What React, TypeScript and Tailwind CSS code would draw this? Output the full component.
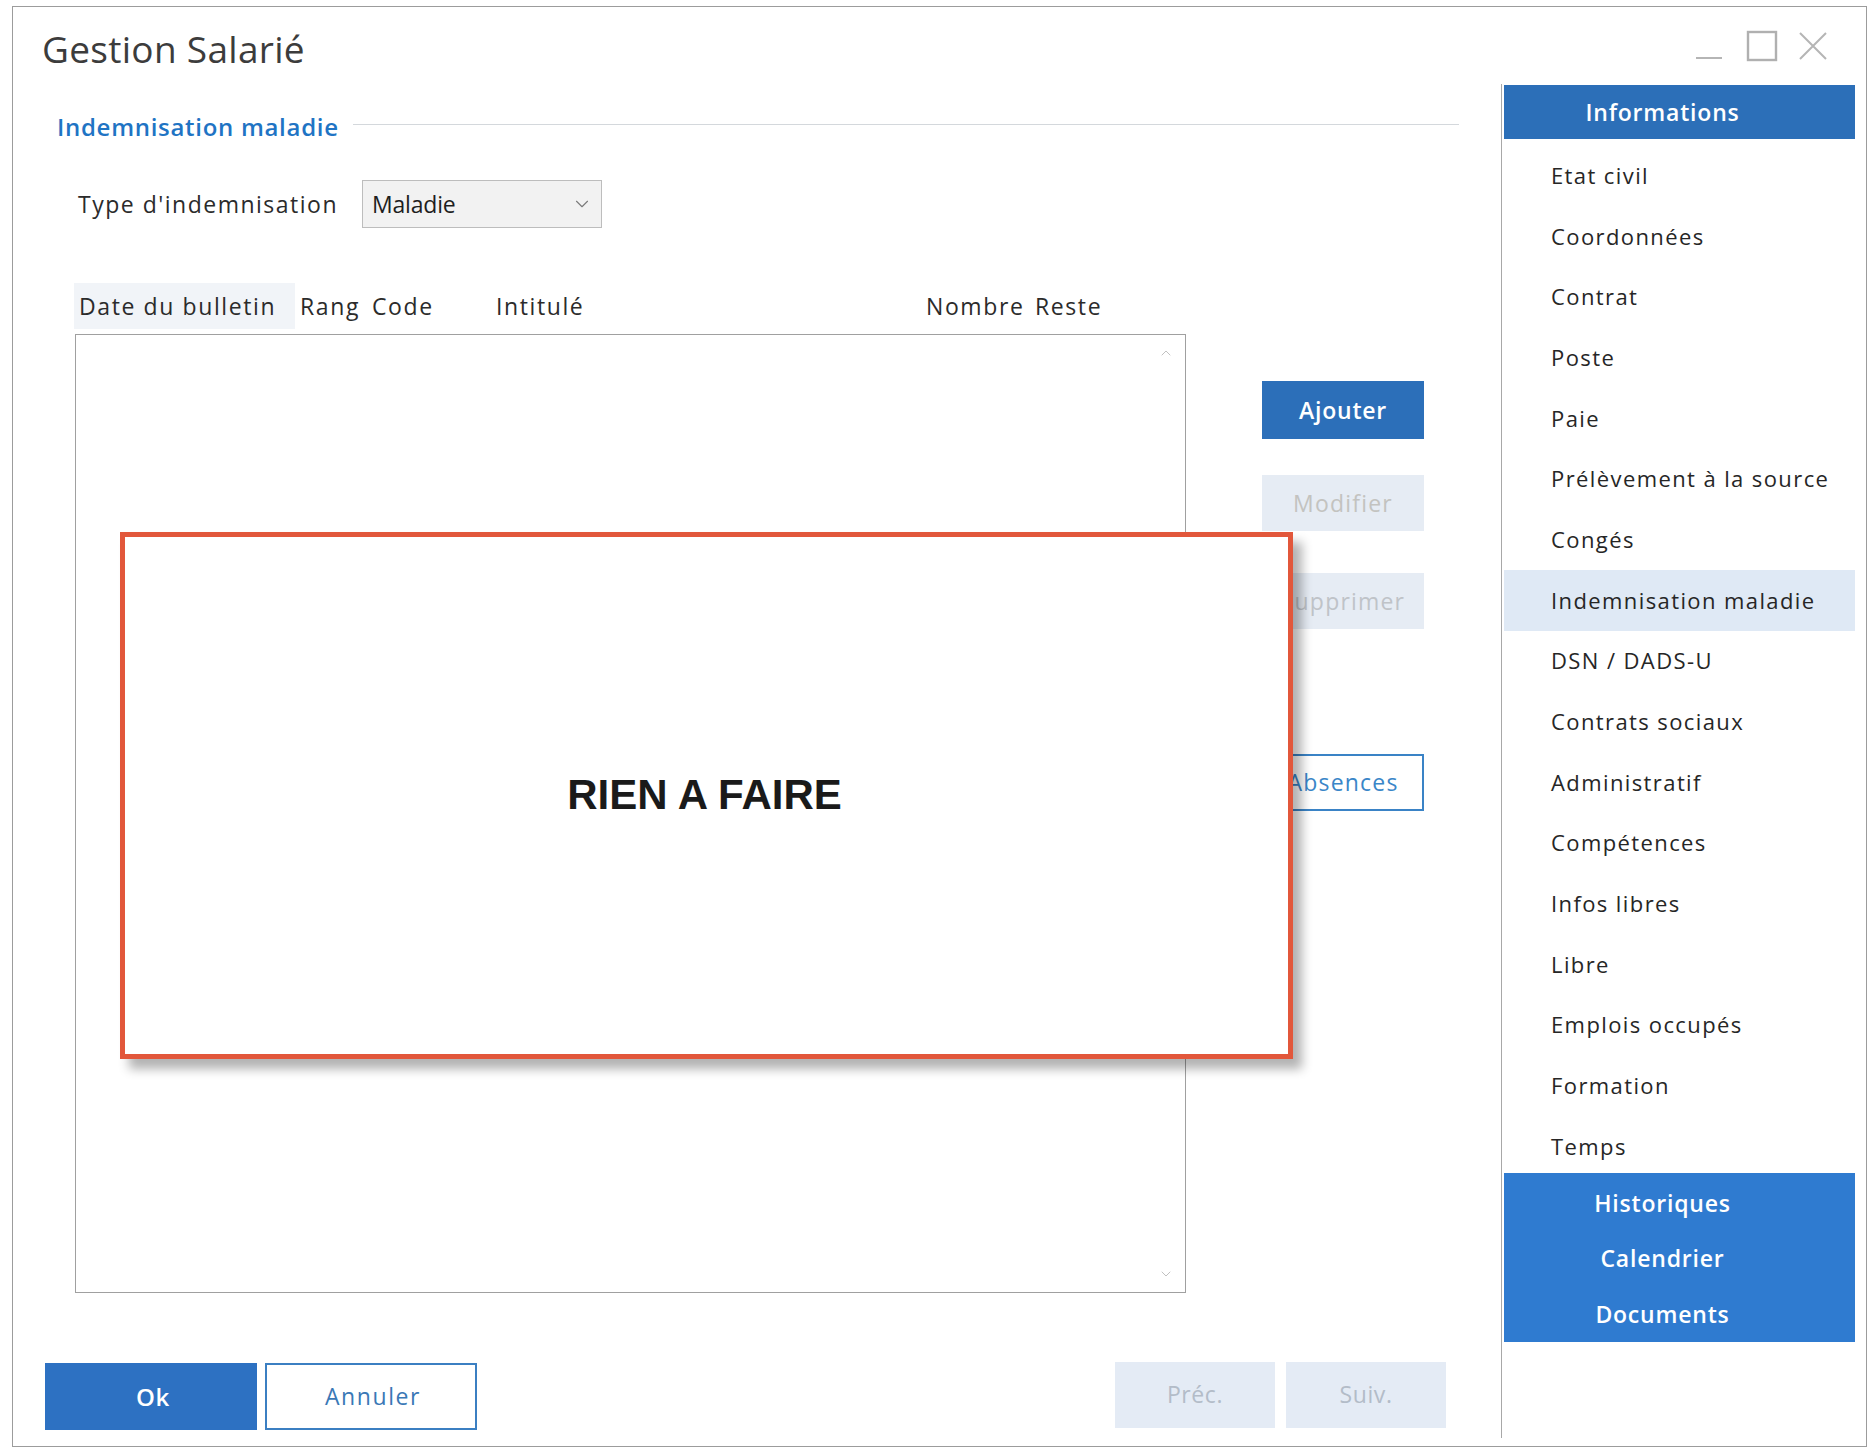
import React from 'react';
import { ChevronDown, ChevronUp } from 'lucide-react';

const FONT = { fontFamily: '"Open Sans", "Noto Sans", sans-serif' };

const menuItems = [
  'Etat civil',
  'Coordonnées',
  'Contrat',
  'Poste',
  'Paie',
  'Prélèvement à la source',
  'Congés',
  'Indemnisation maladie',
  'DSN / DADS-U',
  'Contrats sociaux',
  'Administratif',
  'Compétences',
  'Infos libres',
  'Libre',
  'Emplois occupés',
  'Formation',
  'Temps',
];

const columns = [
  { label: 'Date du bulletin', w: 'w-[221px]', active: true },
  { label: 'Rang', w: 'w-[72px]' },
  { label: 'Code', w: 'w-[124px]' },
  { label: 'Intitulé', w: 'w-[430px]' },
  { label: 'Nombre', w: 'w-[109px]' },
  { label: 'Reste', w: 'w-[100px]' },
];

const App: React.FC = () => {
  return (
    <div className="w-[1875px] h-[1450px] bg-white pt-[6px] pl-[12px]" style={FONT}>
      <div className="relative flex w-[1855px] h-[1441px] border border-[#9c9c9c] bg-white">
        {/* Main column */}
        <div className="flex flex-col w-[1488px]">
          <div className="h-[82px] flex items-center pl-[29px]">
            <h1 className="text-[37px] text-[#3c3c3c] leading-none tracking-[0.3px]">Gestion Salarié</h1>
          </div>

          <div className="h-[76px] flex items-center pl-[44px] pr-[42px]">
            <span className="text-[24px] font-semibold text-[#1f74c4] tracking-[0.7px]">Indemnisation maladie</span>
            <div className="flex-1 h-px bg-[#d4d8dc] ml-[14px] mt-[-6px]" />
          </div>

          <div className="h-[78px] flex items-center pl-[65px]">
            <span className="w-[284px] text-[23px] text-[#2b2b2b] tracking-[1.5px]">Type d'indemnisation</span>
            <div className="w-[240px] h-[48px] bg-[#f2f2f2] border border-[#bdbdbd] flex items-center justify-between pl-[9px] pr-[8px]">
              <span className="text-[23px] text-[#1e1e1e] tracking-[-0.2px]">Maladie</span>
              <ChevronDown size={22} strokeWidth={1.2} className="text-[#7a7a7a]" />
            </div>
          </div>

          <div className="mt-[40px] h-[46px] flex pl-[61px]">
            {columns.map((c) => (
              <div
                key={c.label}
                className={`${c.w} h-full flex items-center pl-[5px] text-[23px] text-[#2b2b2b] tracking-[1.6px] ${c.active ? 'bg-[#f1f4f8]' : ''}`}
              >
                {c.label}
              </div>
            ))}
          </div>

          <div className="mt-[5px] flex pl-[62px]">
            <div className="w-[1111px] h-[959px] border border-[#a0a0a0] bg-white flex justify-end">
              <div className="w-[22px] flex flex-col justify-between items-center py-[10px] mr-[8px]">
                <ChevronUp size={16} strokeWidth={1.4} className="text-[#bcbcbc]" />
                <ChevronDown size={16} strokeWidth={1.4} className="text-[#bcbcbc]" />
              </div>
            </div>

            <div className="ml-[76px] w-[162px] pt-[47px] flex flex-col">
              <button className="h-[58px] bg-[#2c6fb9] text-white text-[23px] font-semibold tracking-[0.8px]">Ajouter</button>
              <button className="mt-[36px] h-[56px] bg-[#e6ecf4] text-[#c3c3c0] text-[23px] tracking-[1.2px]">Modifier</button>
              <button className="mt-[42px] h-[56px] bg-[#e6ecf4] text-[#bfc3c8] text-[23px] tracking-[1.2px]">Supprimer</button>
              <button className="mt-[125px] h-[57px] bg-white border-2 border-[#3a83c6] text-[#3a86c8] text-[23px] tracking-[1.2px]">Absences</button>
            </div>
          </div>

          <div className="mt-[70px] flex items-center pl-[32px] pr-[55px]">
            <button className="w-[212px] h-[67px] bg-[#2d71c2] text-white text-[24px] font-semibold tracking-[0.8px] pl-[4px]">Ok</button>
            <button className="ml-[8px] w-[212px] h-[67px] bg-white border-2 border-[#3b7fc2] text-[#3a78b6] text-[23px] tracking-[1.6px] pl-[4px]">Annuler</button>
            <div className="flex-1" />
            <button className="w-[160px] h-[66px] mt-[-4px] bg-[#e4ebf5] text-[#b3bcc8] text-[23px] tracking-[0.6px]">Préc.</button>
            <button className="ml-[11px] w-[160px] h-[66px] mt-[-4px] bg-[#e4ebf5] text-[#b3bcc8] text-[23px] tracking-[0.6px]">Suiv.</button>
          </div>
        </div>

        {/* Side column */}
        <div className="flex flex-col flex-1">
          <div className="h-[77px] flex items-center justify-end pr-[37px]">
            <svg width="30" height="30" viewBox="0 0 30 30" className="mt-[2px]">
              <line x1="2" y1="26" x2="28" y2="26" stroke="#b5b5b5" strokeWidth="2" />
            </svg>
            <svg width="32" height="32" viewBox="0 0 32 32" className="ml-[22px]">
              <rect x="2" y="2" width="28" height="28" fill="none" stroke="#b0b0b0" strokeWidth="2.4" />
            </svg>
            <svg width="32" height="32" viewBox="0 0 32 32" className="ml-[19px]">
              <path d="M3 3 L29 29 M29 3 L3 29" stroke="#b5b5b5" strokeWidth="2" fill="none" />
            </svg>
          </div>

          <div className="flex-1 mb-[8px] border-l border-[#a8a8a8] pl-[2px] pr-[11px]">
            <div className="h-[54px] mt-[1px] bg-[#2c6fb8] flex items-center justify-center pr-[34px] text-white text-[23px] font-semibold tracking-[0.8px]">
              Informations
            </div>
            <div className="mt-[6px]">
              {menuItems.map((item) => (
                <div
                  key={item}
                  className={`h-[60.7px] flex items-center pl-[47px] text-[22px] text-[#262626] tracking-[1.4px] ${item === 'Indemnisation maladie' ? 'bg-[#dfe9f5]' : ''}`}
                >
                  {item}
                </div>
              ))}
            </div>
            <div className="bg-[#2f7bd0] h-[169px] mt-[-4px] flex flex-col pt-[3px]">
              {['Historiques', 'Calendrier', 'Documents'].map((t) => (
                <div key={t} className="h-[56px] flex items-center justify-center pr-[34px] text-white text-[23px] font-semibold tracking-[0.8px]">
                  {t}
                </div>
              ))}
            </div>
          </div>
        </div>

        {/* Overlay note */}
        <div className="absolute left-[107px] top-[525px] w-[1173px] h-[527px] bg-white border-[5px] border-[#e2573b] shadow-[9px_10px_10px_rgba(0,0,0,0.3)] flex items-center justify-center">
          <span className="text-[42px] font-bold text-[#1a1a1a] mt-[-2px] ml-[-4px]" style={{ fontFamily: '"Liberation Sans", Arial, sans-serif' }}>
            RIEN A FAIRE
          </span>
        </div>
      </div>
    </div>
  );
};

export default App;
